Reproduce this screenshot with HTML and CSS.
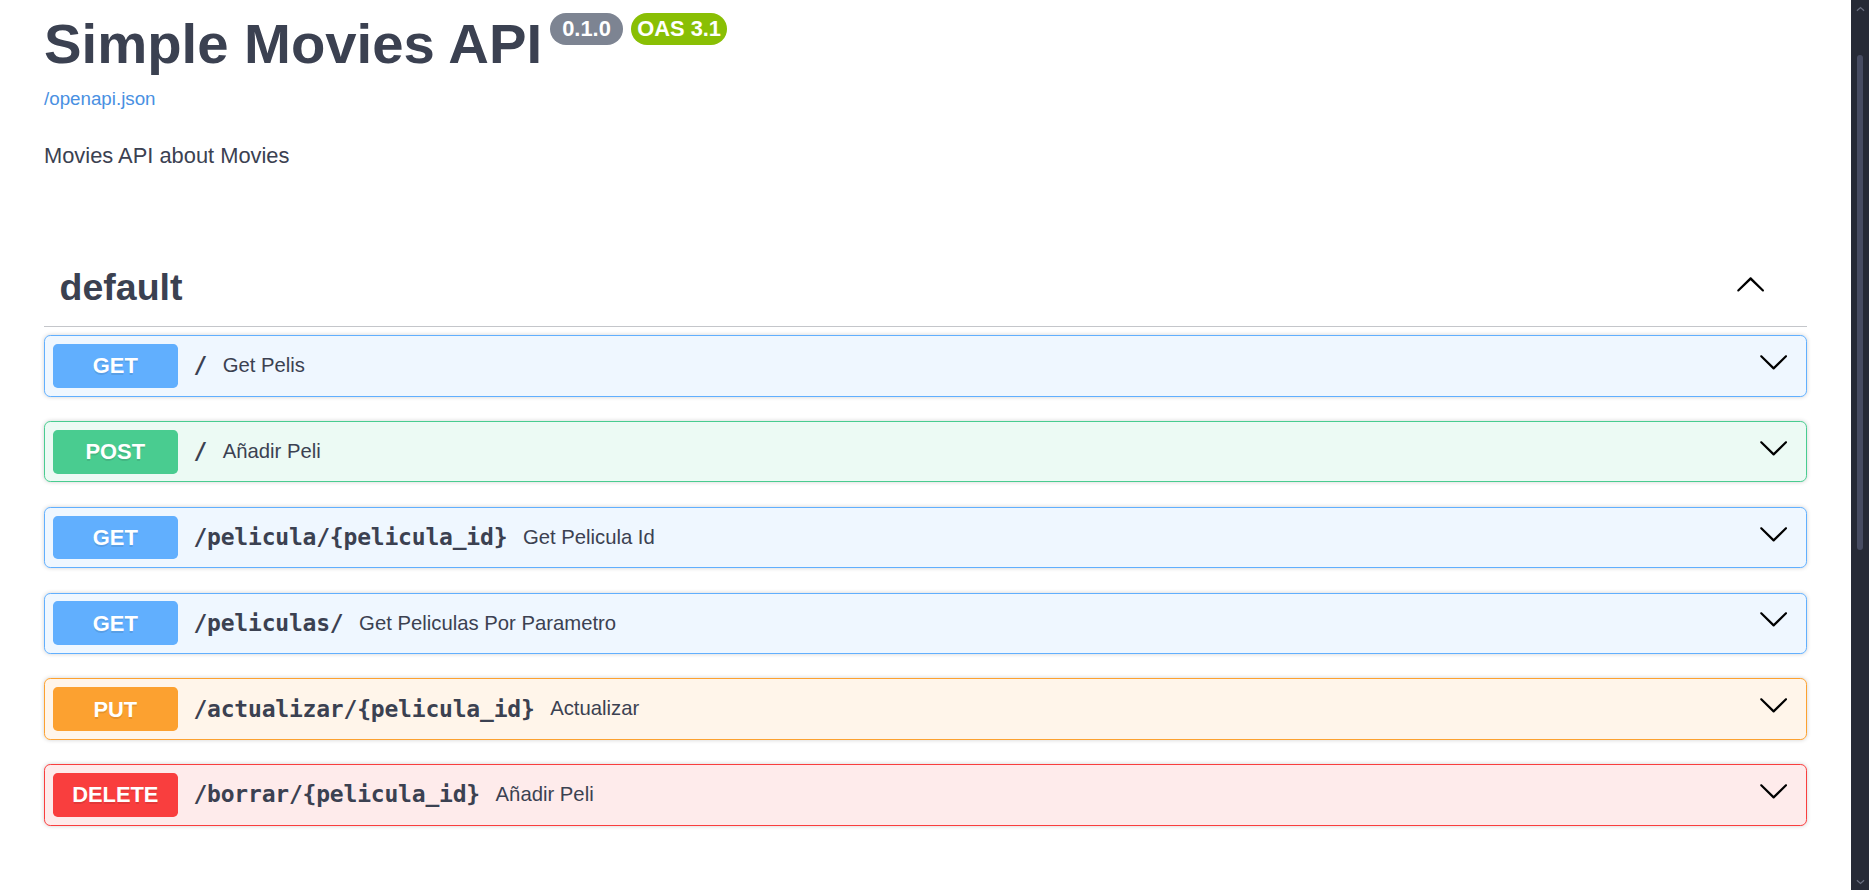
FILE: index.html
```html
<!DOCTYPE html>
<html lang="en">
<head>
<meta charset="utf-8">
<title>Simple Movies API - Swagger UI</title>
<link rel="stylesheet" href="styles.css">
</head>
<body>
<div class="viewport">
  <main class="page">
    <section class="info">
      <div class="title-row">
        <h2 class="title">Simple Movies API</h2>
        <small class="stamp"><pre class="version"> 0.1.0 </pre></small>
        <small class="stamp stamp-oas"><pre class="version">OAS 3.1</pre></small>
      </div>
      <div class="url-line"><a class="link" href="#">/openapi.json</a></div>
      <p class="description">Movies API about Movies</p>
    </section>

    <section class="tag-section">
      <h3 class="opblock-tag">
        <span class="tag-name">default</span>
        <button class="expand" type="button" aria-label="Collapse operation">
          <svg class="tag-arrow" viewBox="0 0 20 20"><path d="M17.418 14.908c.268.271.701.271.969 0 .268-.271.268-.709 0-.979l-7.908-7.83c-.268-.271-.701-.271-.969 0l-7.908 7.83c-.268.27-.268.707 0 .979.268.271.701.271.969 0l7.418-7.141 7.418 7.141z"/></svg>
        </button>
      </h3>

      <div class="ops">
        <div class="opblock op-get">
          <span class="method">GET</span>
          <span class="path">/</span>
          <span class="summary">Get Pelis</span>
          <svg class="op-arrow" viewBox="0 0 20 20"><path d="M17.418 6.109c.272-.268.709-.268.979 0s.271.701 0 .969l-7.908 7.83c-.27.268-.707.268-.979 0l-7.908-7.830c-.27-.268-.27-.701 0-.969.271-.268.709-.268.979 0L10 13.25l7.418-7.141z"/></svg>
        </div>
        <div class="opblock op-post">
          <span class="method">POST</span>
          <span class="path">/</span>
          <span class="summary">Añadir Peli</span>
          <svg class="op-arrow" viewBox="0 0 20 20"><path d="M17.418 6.109c.272-.268.709-.268.979 0s.271.701 0 .969l-7.908 7.83c-.27.268-.707.268-.979 0l-7.908-7.83c-.27-.268-.27-.701 0-.969.271-.268.709-.268.979 0L10 13.25l7.418-7.141z"/></svg>
        </div>
        <div class="opblock op-get">
          <span class="method">GET</span>
          <span class="path">/pelicula/{pelicula_id}</span>
          <span class="summary">Get Pelicula Id</span>
          <svg class="op-arrow" viewBox="0 0 20 20"><path d="M17.418 6.109c.272-.268.709-.268.979 0s.271.701 0 .969l-7.908 7.83c-.27.268-.707.268-.979 0l-7.908-7.83c-.27-.268-.27-.701 0-.969.271-.268.709-.268.979 0L10 13.25l7.418-7.141z"/></svg>
        </div>
        <div class="opblock op-get">
          <span class="method">GET</span>
          <span class="path">/peliculas/</span>
          <span class="summary">Get Peliculas Por Parametro</span>
          <svg class="op-arrow" viewBox="0 0 20 20"><path d="M17.418 6.109c.272-.268.709-.268.979 0s.271.701 0 .969l-7.908 7.83c-.27.268-.707.268-.979 0l-7.908-7.83c-.27-.268-.27-.701 0-.969.271-.268.709-.268.979 0L10 13.25l7.418-7.141z"/></svg>
        </div>
        <div class="opblock op-put">
          <span class="method">PUT</span>
          <span class="path">/actualizar/{pelicula_id}</span>
          <span class="summary">Actualizar</span>
          <svg class="op-arrow" viewBox="0 0 20 20"><path d="M17.418 6.109c.272-.268.709-.268.979 0s.271.701 0 .969l-7.908 7.83c-.27.268-.707.268-.979 0l-7.908-7.83c-.27-.268-.27-.701 0-.969.271-.268.709-.268.979 0L10 13.25l7.418-7.141z"/></svg>
        </div>
        <div class="opblock op-delete">
          <span class="method">DELETE</span>
          <span class="path">/borrar/{pelicula_id}</span>
          <span class="summary">Añadir Peli</span>
          <svg class="op-arrow" viewBox="0 0 20 20"><path d="M17.418 6.109c.272-.268.709-.268.979 0s.271.701 0 .969l-7.908 7.83c-.27.268-.707.268-.979 0l-7.908-7.83c-.27-.268-.27-.701 0-.969.271-.268.709-.268.979 0L10 13.25l7.418-7.141z"/></svg>
        </div>
      </div>
    </section>
  </main>

  <div class="scrollbar" aria-hidden="true">
    <div class="sb-btn">
      <svg class="sb-icon" viewBox="0 0 10 6"><path d="M1 5 L5 1.5 L9 5" fill="none" stroke="currentColor" stroke-width="1.4"/></svg>
    </div>
    <div class="sb-track"><div class="sb-thumb"></div></div>
    <div class="sb-btn sb-btn-bottom">
      <svg class="sb-icon" viewBox="0 0 10 6"><path d="M1 1 L5 4.5 L9 1" fill="none" stroke="currentColor" stroke-width="1.4"/></svg>
    </div>
  </div>
</div>
</body>
</html>
```

FILE: styles.css
```css
* {
  box-sizing: border-box;
}

html,
body {
  margin: 0;
  height: 100%;
  overflow: hidden;
  background: #ffffff;
}

body {
  font-family: "Liberation Sans", Arial, sans-serif;
  color: #3b4151;
}

.viewport {
  display: flex;
  height: 890px;
}

.page {
  flex: 1;
  min-width: 0;
  padding: 12px 44px 0;
}

/* ---------- info ---------- */
.title-row {
  display: flex;
  align-items: flex-start;
}

.title {
  margin: 0;
  font-size: 56.25px;
  font-weight: 700;
  line-height: 64.6px;
  color: #3b4151;
}

.stamp {
  margin: 1.3px 0 0 7.8px;
  padding: 3.1px 6.25px;
  border-radius: 90px;
  background: #7d8492;
}

.stamp-oas {
  background: #89bf04;
}

.version {
  margin: 0;
  font-family: "Liberation Sans", Arial, sans-serif;
  font-size: 21.875px;
  font-weight: 700;
  line-height: 25.4px;
  color: #ffffff;
  white-space: pre;
}

.url-line {
  margin-top: 11.1px;
  font-size: 18.75px;
  line-height: 21.5px;
}

.link {
  color: #4990e2;
  text-decoration: none;
}

.description {
  margin: 34.25px 0 0;
  font-size: 21.875px;
  line-height: 25.1px;
  color: #3b4151;
}

/* ---------- tag ---------- */
.tag-section {
  margin-top: 81.2px;
}

.opblock-tag {
  display: flex;
  align-items: flex-start;
  margin: 0;
  padding: 16.6px 31.25px 16.3px 15.6px;
  border-bottom: 1px solid rgba(59, 65, 81, 0.3);
  font-size: 37.5px;
  font-weight: 700;
  line-height: 43.1px;
  color: #3b4151;
}

.tag-name {
  flex: 1;
}

.expand {
  display: flex;
  margin: 1.8px 9.35px 0 0;
  padding: 0;
  border: none;
  background: none;
}

.tag-arrow {
  display: block;
  width: 31.25px;
  height: 31.25px;
  fill: #000000;
}

/* ---------- operations ---------- */
.ops {
  margin-top: 8.6px;
}

.opblock {
  display: flex;
  align-items: center;
  margin-bottom: 24.45px;
  padding: 7.8px;
  border: 1px solid #000000;
  border-radius: 6.25px;
  box-shadow: 0 0 4.7px rgba(0, 0, 0, 0.19);
}

.method {
  flex: none;
  width: 125px;
  padding: 9.375px 0;
  border-radius: 4.7px;
  font-size: 21.875px;
  font-weight: 700;
  line-height: 25px;
  text-align: center;
  color: #ffffff;
  text-shadow: 0 1.5px 0 rgba(0, 0, 0, 0.1);
}

.path {
  flex: none;
  padding: 0 15.6px;
  font-family: "DejaVu Sans Mono", "Liberation Mono", monospace;
  font-size: 23px;
  font-weight: 700;
  line-height: 27px;
  letter-spacing: -0.2px;
  color: #3b4151;
}

.summary {
  flex: 1 1 auto;
  font-size: 20.3px;
  line-height: 23.4px;
  color: #3b4151;
}

.op-arrow {
  flex: none;
  align-self: flex-start;
  width: 31.25px;
  height: 31.25px;
  margin: 2px 8.5px 0 0;
  fill: #000000;
}

.op-get {
  border-color: #61affe;
  background: rgba(97, 175, 254, 0.1);
}

.op-get .method {
  background: #61affe;
}

.op-post {
  border-color: #49cc90;
  background: rgba(73, 204, 144, 0.1);
}

.op-post .method {
  background: #49cc90;
}

.op-put {
  border-color: #fca130;
  background: rgba(252, 161, 48, 0.1);
}

.op-put .method {
  background: #fca130;
}

.op-delete {
  border-color: #f93e3e;
  background: rgba(249, 62, 62, 0.1);
}

.op-delete .method {
  background: #f93e3e;
}

/* ---------- scrollbar ---------- */
.scrollbar {
  flex: none;
  display: flex;
  flex-direction: column;
  width: 18px;
  height: 890px;
  background: #262a36;
}

.sb-btn {
  display: flex;
  align-items: center;
  justify-content: center;
  height: 17px;
  color: #6a6f80;
}

.sb-icon {
  width: 9px;
  height: 6px;
}

.sb-track {
  flex: 1;
  display: flex;
  justify-content: center;
}

.sb-thumb {
  width: 6px;
  height: 495px;
  margin-top: 38px;
  border-radius: 3px;
  background: #474c62;
}
```
